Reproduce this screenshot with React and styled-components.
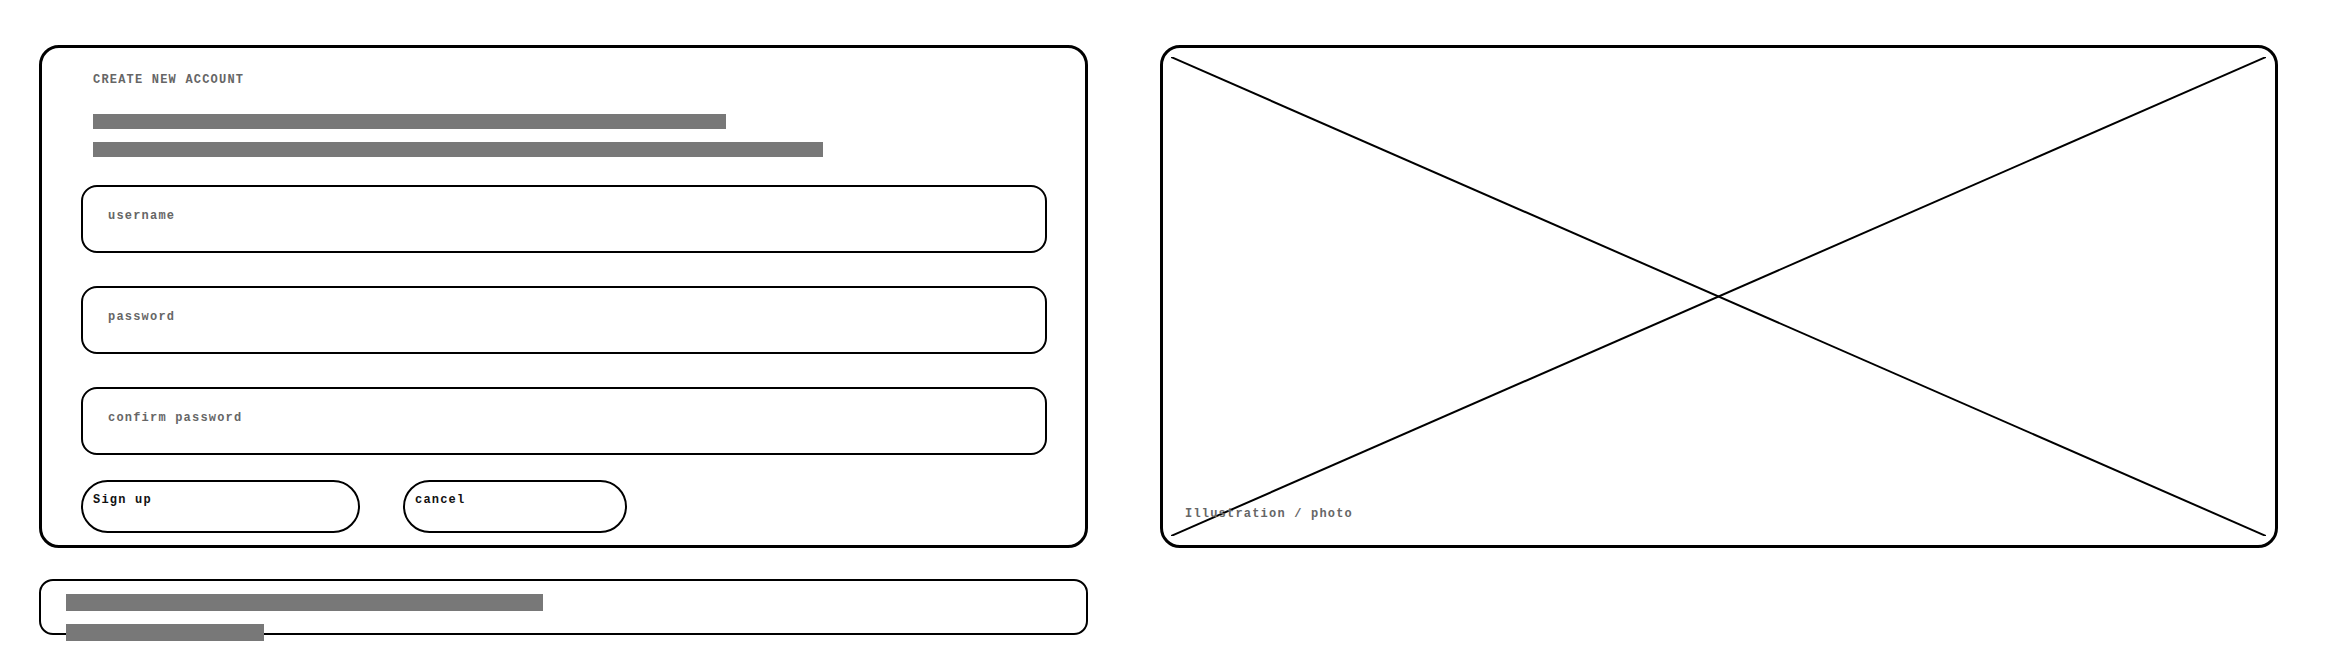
import React from 'react';
import styled, { createGlobalStyle } from 'styled-components';

const GlobalStyle = createGlobalStyle`
  html, body {
    margin: 0;
    padding: 0;
    background: #ffffff;
  }
  body {
    font-family: "Liberation Mono", "DejaVu Sans Mono", monospace;
  }
`;

const fields = ['username', 'password', 'confirm password'];

function App() {
  return (
    <>
      <GlobalStyle />
      <Page>
        <LeftColumn>
          <FormCard>
            <Title>CREATE NEW ACCOUNT</Title>
            <Bars>
              <Bar width={633} />
              <Bar width={730} />
            </Bars>
            <Fields>
              {fields.map((label) => (
                <Field key={label}>
                  <FieldLabel>{label}</FieldLabel>
                </Field>
              ))}
            </Fields>
            <ButtonRow>
              <PillButton width={279}>Sign up</PillButton>
              <PillButton width={224}>cancel</PillButton>
            </ButtonRow>
          </FormCard>
          <NoteCard>
            <Bar width={477} height={17} />
            <Bar width={198} height={17} />
          </NoteCard>
        </LeftColumn>

        <PhotoCard>
          <Cross viewBox="0 0 1095 479" preserveAspectRatio="none">
            <line x1="0" y1="0" x2="1095" y2="479" />
            <line x1="0" y1="479" x2="1095" y2="0" />
          </Cross>
          <Caption>Illustration / photo</Caption>
        </PhotoCard>
      </Page>
    </>
  );
}

export default App;

const Page = styled.div`
  display: flex;
  align-items: flex-start;
  gap: 72px;
  padding: 45px 0 0 39px;
  width: 2352px;
  height: 660px;
  box-sizing: border-box;
  overflow: hidden;
`;

const LeftColumn = styled.div`
  display: flex;
  flex-direction: column;
  gap: 31px;
  width: 1049px;
`;

const FormCard = styled.div`
  display: flex;
  flex-direction: column;
  height: 503px;
  box-sizing: border-box;
  border: 3px solid #000;
  border-radius: 20px;
  padding: 24px 38px 0 39px;
`;

const Title = styled.div`
  margin-left: 12px;
  font-size: 12px;
  line-height: 16px;
  letter-spacing: 1.2px;
  font-weight: bold;
  color: #666;
`;

const Bars = styled.div`
  display: flex;
  flex-direction: column;
  gap: 13px;
  margin: 26px 0 0 12px;
`;

const Bar = styled.div`
  width: ${(props) => props.width}px;
  height: ${(props) => props.height || 15}px;
  background: #787878;
  flex-shrink: 0;
`;

const Fields = styled.div`
  display: flex;
  flex-direction: column;
  gap: 33px;
  margin-top: 28px;
`;

const Field = styled.div`
  height: 68px;
  box-sizing: border-box;
  border: 2px solid #000;
  border-radius: 16px;
  padding: 19px 25px 0;
`;

const FieldLabel = styled.span`
  font-size: 12px;
  line-height: 16px;
  letter-spacing: 1.2px;
  font-weight: bold;
  color: #666;
`;

const ButtonRow = styled.div`
  display: flex;
  gap: 43px;
  margin-top: 25px;
`;

const PillButton = styled.button`
  width: ${(props) => props.width}px;
  height: 53px;
  box-sizing: border-box;
  border: 2px solid #000;
  border-radius: 27px;
  background: #fff;
  padding: 10px 10px 0;
  text-align: left;
  display: flex;
  align-items: flex-start;
  font-family: "Liberation Mono", "DejaVu Sans Mono", monospace;
  font-size: 12px;
  line-height: 16px;
  letter-spacing: 1.2px;
  font-weight: bold;
  color: #111;
`;

const NoteCard = styled.div`
  display: flex;
  flex-direction: column;
  gap: 13px;
  height: 56px;
  box-sizing: border-box;
  border: 2px solid #000;
  border-radius: 14px;
  padding: 13px 0 0 25px;
`;

const PhotoCard = styled.div`
  position: relative;
  display: flex;
  flex-direction: column;
  justify-content: flex-end;
  width: 1118px;
  height: 503px;
  box-sizing: border-box;
  border: 3px solid #000;
  border-radius: 20px;
  padding: 0 22px 23px;
`;

const Cross = styled.svg`
  position: absolute;
  left: 8px;
  top: 9px;
  width: 1095px;
  height: 479px;

  line {
    stroke: #000;
    stroke-width: 2;
  }
`;

const Caption = styled.div`
  position: relative;
  font-size: 12px;
  line-height: 16px;
  letter-spacing: 1.2px;
  font-weight: bold;
  color: #666;
`;
